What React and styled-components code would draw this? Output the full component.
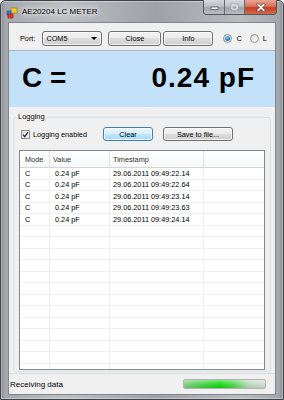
import React from 'react';
import styled, { createGlobalStyle } from 'styled-components';

const GlobalStyle = createGlobalStyle`
  html, body {
    margin: 0;
    padding: 0;
    background: #fff;
  }
  body {
    font-family: "Liberation Sans", Arial, sans-serif;
    color: #000;
  }
`;

const Window = styled.div`
  width: 284px;
  height: 400px;
  box-sizing: border-box;
  display: flex;
  flex-direction: column;
  padding: 0 7px 4px;
  border: 1px solid #3f4347;
  border-radius: 5px 5px 0 0;
  background:
    linear-gradient(90deg, rgba(0, 0, 0, 0.18) 0px, rgba(0, 0, 0, 0) 4px, rgba(0, 0, 0, 0) calc(100% - 4px), rgba(0, 0, 0, 0.18) 100%),
    linear-gradient(90deg, #a3a7ab 0%, #bcc0c3 22%, #9ea2a6 55%, #b9bcbf 85%, #a2a6aa 100%);
  box-shadow: inset 0 0 0 1px rgba(255, 255, 255, 0.35);
`;

const TitleBar = styled.div`
  display: flex;
  align-items: flex-start;
  height: 21px;
  margin: 0 -1px 0 -2px;
`;

const AppIcon = styled.svg`
  margin-top: 6px;
  flex: none;
`;

const Title = styled.div`
  margin: 5px 0 0 4px;
  font-size: 8px;
  line-height: 11px;
  text-shadow: 0 0 4px #fff, 0 0 6px #fff, 0 0 8px rgba(255, 255, 255, 0.8);
`;

const CaptionButtons = styled.div`
  display: flex;
  margin: -1px 0 0 auto;
  height: 14px;
  border: 1px solid #52575c;
  border-top: none;
  border-radius: 0 0 4px 4px;
  overflow: hidden;
`;

const CaptionButton = styled.div`
  width: ${p => p.$w}px;
  height: 100%;
  display: flex;
  align-items: center;
  justify-content: center;
  border-left: ${p => (p.$first ? 'none' : '1px solid #666b70')};
  background: ${p =>
    p.$close
      ? 'linear-gradient(#e9a593 0%, #d9735f 45%, #c53e22 55%, #d66a4c 100%)'
      : 'linear-gradient(#d6d9dc 0%, #bcc0c4 45%, #a0a5aa 55%, #b9bdc1 100%)'};
`;

const Client = styled.div`
  flex: 1;
  min-height: 0;
  display: flex;
  flex-direction: column;
  background: #f0f0f0;
  border: 1px solid #80868c;
`;

const Toolbar = styled.div`
  height: 27px;
  box-sizing: border-box;
  padding: 3px 0 0 11px;
  display: flex;
  align-items: center;
  font-size: 7.3px;
`;

const Label = styled.span`
  margin-right: 7px;
`;

const Combo = styled.div`
  width: 60px;
  height: 15px;
  box-sizing: border-box;
  display: flex;
  align-items: center;
  justify-content: space-between;
  padding: 0 4px 0 3px;
  border: 1px solid #707070;
  border-radius: 3px;
  background: linear-gradient(#f2f2f2 0%, #ebebeb 50%, #dddddd 50%, #cfcfcf 100%);
  box-shadow: inset 0 0 0 1px rgba(255, 255, 255, 0.7);
`;

const Arrow = styled.span`
  width: 0;
  height: 0;
  border-left: 3px solid transparent;
  border-right: 3px solid transparent;
  border-top: 3px solid #000;
`;

const Button = styled.div`
  width: ${p => p.$w}px;
  height: ${p => p.$h || 15}px;
  margin-left: ${p => p.$ml || 0}px;
  box-sizing: border-box;
  display: flex;
  align-items: center;
  justify-content: center;
  font-size: 7.3px;
  border: 1px solid ${p => (p.$default ? '#3c7fb1' : '#707070')};
  border-radius: 3px;
  background: ${p =>
    p.$default
      ? 'linear-gradient(#eaf6fd 0%, #d9f0fc 50%, #bee6fd 50%, #a7d9f5 100%)'
      : 'linear-gradient(#f2f2f2 0%, #ebebeb 50%, #dddddd 50%, #cfcfcf 100%)'};
  box-shadow: inset 0 0 0 1px rgba(255, 255, 255, 0.7);
`;

const RadioGroup = styled.div`
  display: flex;
  align-items: center;
  margin-left: ${p => p.$ml}px;
  gap: 4px;
  font-size: 7.5px;
`;

const RadioCircle = styled.span`
  width: 9px;
  height: 9px;
  box-sizing: border-box;
  border-radius: 50%;
  border: 1px solid #8f8f8f;
  background: linear-gradient(135deg, #e0e0e0, #fbfbfb);
  display: flex;
  align-items: center;
  justify-content: center;
  &::after {
    content: '';
    display: ${p => (p.$checked ? 'block' : 'none')};
    width: 5px;
    height: 5px;
    border-radius: 50%;
    background: radial-gradient(circle at 40% 35%, #8fe0ff 0%, #2a8bd0 45%, #0e3f75 100%);
  }
`;

const Display = styled.div`
  height: 57px;
  box-sizing: border-box;
  border-top: 1px solid #a8b8c8;
  background: #c4e1fa;
  display: flex;
  align-items: center;
  justify-content: space-between;
  padding: 0 20px 3px 13px;
  font-weight: bold;
  font-size: 28px;
  line-height: 1;
`;

const Value = styled.span`
  letter-spacing: 1px;
`;

const LoggingArea = styled.div`
  flex: 1;
  min-height: 0;
  display: flex;
  flex-direction: column;
  padding: 5px 4px 1px;
`;

const Group = styled.fieldset`
  flex: 1;
  min-height: 0;
  min-width: 0;
  margin: 0;
  padding: 5px 6px 1px;
  display: flex;
  flex-direction: column;
  border: 1px solid #d5dfe5;
  border-radius: 3px;
`;

const Legend = styled.legend`
  font-size: 7.5px;
  line-height: 10px;
  padding: 0 1px;
  margin-left: -3px;
`;

const CheckRow = styled.div`
  display: flex;
  align-items: center;
  height: 14px;
`;

const CheckLabel = styled.div`
  width: 82px;
  margin-left: 1px;
  display: flex;
  align-items: center;
  gap: 3px;
  font-size: 7.3px;
`;

const CheckBox = styled.span`
  width: 9px;
  height: 9px;
  box-sizing: border-box;
  border: 1px solid #8e8f8f;
  background: linear-gradient(135deg, #dcdcdc, #fafafa);
  display: flex;
  align-items: center;
  justify-content: center;
`;

const List = styled.div`
  flex: 1;
  min-height: 0;
  margin: 9px 0 0 -1px;
  width: 246px;
  box-sizing: border-box;
  border: 1px solid #828790;
  background: #fff;
  overflow: hidden;
  font-size: 7.3px;
`;

const Grid = styled.div`
  display: grid;
  grid-template-columns: 30px 60px 94px 1fr;
  height: ${p => (p.$header ? 17 : 11.5)}px;
  box-sizing: border-box;
  border-bottom: 1px solid ${p => (p.$header ? '#d5d5d5' : '#f0f0f0')};
  background: ${p => (p.$header ? 'linear-gradient(#ffffff, #f6f7f8)' : '#fff')};
  color: ${p => (p.$header ? '#333' : '#000')};
`;

const Cell = styled.div`
  border-right: 1px solid ${p => (p.$header ? '#e2e2e2' : '#f0f0f0')};
  padding-left: ${p => p.$pad}px;
  display: flex;
  align-items: center;
  white-space: nowrap;
  overflow: hidden;
  &:last-child {
    border-right: none;
  }
`;

const StatusBar = styled.div`
  height: 21px;
  box-sizing: border-box;
  border-top: 1px solid #dadada;
  display: flex;
  align-items: center;
  justify-content: space-between;
  padding: 0 9px 0 1px;
  font-size: 8px;
`;

const Progress = styled.div`
  width: 83px;
  height: 10px;
  box-sizing: border-box;
  border: 1px solid #b2b2b2;
  border-radius: 2px;
  background:
    linear-gradient(rgba(255, 255, 255, 0.45), rgba(255, 255, 255, 0.1) 50%, rgba(0, 0, 0, 0.08) 100%),
    linear-gradient(90deg, #7fcf7f 0%, #43d043 20%, #08d808 45%, #4fd64f 62%, #bcd6bc 80%, #d6d9d6 100%);
`;

const rows = [
  ['C', '0.24 pF', '29.06.2011 09:49:22.14'],
  ['C', '0.24 pF', '29.06.2011 09:49:22.64'],
  ['C', '0.24 pF', '29.06.2011 09:49:23.14'],
  ['C', '0.24 pF', '29.06.2011 09:49:23.63'],
  ['C', '0.24 pF', '29.06.2011 09:49:24.14'],
];

const allRows = [...rows, ...Array.from({ length: 14 }, () => ['', '', ''])];

export default function App() {
  return (
    <>
      <GlobalStyle />
      <Window>
        <TitleBar>
          <AppIcon width="12" height="12" viewBox="0 0 12 12">
            <rect x="5" y="1" width="6" height="5" fill="#f2c623" stroke="#9a7a10" strokeWidth="0.6" />
            <rect x="1" y="4" width="4" height="4" fill="#3a78d8" stroke="#1d4a90" strokeWidth="0.6" />
            <rect x="2" y="7" width="5" height="4" fill="#e03a2a" stroke="#8a1a10" strokeWidth="0.6" />
          </AppIcon>
          <Title>AE20204 LC METER</Title>
          <CaptionButtons>
            <CaptionButton $w={20} $first>
              <svg width="9" height="6" viewBox="0 0 9 6">
                <rect x="1" y="3" width="7" height="2.5" fill="#fff" stroke="#444" strokeWidth="0.7" />
              </svg>
            </CaptionButton>
            <CaptionButton $w={19}>
              <svg width="9" height="8" viewBox="0 0 9 8">
                <rect x="1.5" y="1.5" width="6" height="5" fill="none" stroke="#fff" strokeWidth="1.6" />
                <rect x="1" y="1" width="7" height="6" fill="none" stroke="#555" strokeWidth="0.5" />
              </svg>
            </CaptionButton>
            <CaptionButton $w={31} $close>
              <svg width="10" height="9" viewBox="0 0 10 9">
                <path d="M2 1.5 L8 7.5 M8 1.5 L2 7.5" stroke="#5a1a10" strokeWidth="3" strokeLinecap="round" />
                <path d="M2 1.5 L8 7.5 M8 1.5 L2 7.5" stroke="#fff" strokeWidth="1.8" strokeLinecap="round" />
              </svg>
            </CaptionButton>
          </CaptionButtons>
        </TitleBar>

        <Client>
          <Toolbar>
            <Label>Port:</Label>
            <Combo>
              <span>COM5</span>
              <Arrow />
            </Combo>
            <Button $w={53} $ml={6}>Close</Button>
            <Button $w={50} $ml={2}>Info</Button>
            <RadioGroup $ml={10}>
              <RadioCircle $checked />
              <span>C</span>
            </RadioGroup>
            <RadioGroup $ml={8}>
              <RadioCircle />
              <span>L</span>
            </RadioGroup>
          </Toolbar>

          <Display>
            <span>C =</span>
            <Value>0.24 pF</Value>
          </Display>

          <LoggingArea>
            <Group>
              <Legend>Logging</Legend>
              <CheckRow>
                <CheckLabel>
                  <CheckBox>
                    <svg width="7" height="7" viewBox="0 0 7 7">
                      <path d="M1 3.6 L2.8 5.6 L6 1.2" fill="none" stroke="#1f2a44" strokeWidth="1.3" />
                    </svg>
                  </CheckBox>
                  <span>Logging enabled</span>
                </CheckLabel>
                <Button $w={50} $h={14} $default>Clear</Button>
                <Button $w={70} $h={14} $ml={10}>Save to file...</Button>
              </CheckRow>

              <List>
                <Grid $header>
                  <Cell $header $pad={5}>Mode</Cell>
                  <Cell $header $pad={3}>Value</Cell>
                  <Cell $header $pad={3}>Timestamp</Cell>
                  <Cell $header />
                </Grid>
                {allRows.map((r, i) => (
                  <Grid key={i}>
                    <Cell $pad={5}>{r[0]}</Cell>
                    <Cell $pad={5}>{r[1]}</Cell>
                    <Cell $pad={3}>{r[2]}</Cell>
                    <Cell />
                  </Grid>
                ))}
              </List>
            </Group>
          </LoggingArea>

          <StatusBar>
            <span>Receiving data</span>
            <Progress />
          </StatusBar>
        </Client>
      </Window>
    </>
  );
}
